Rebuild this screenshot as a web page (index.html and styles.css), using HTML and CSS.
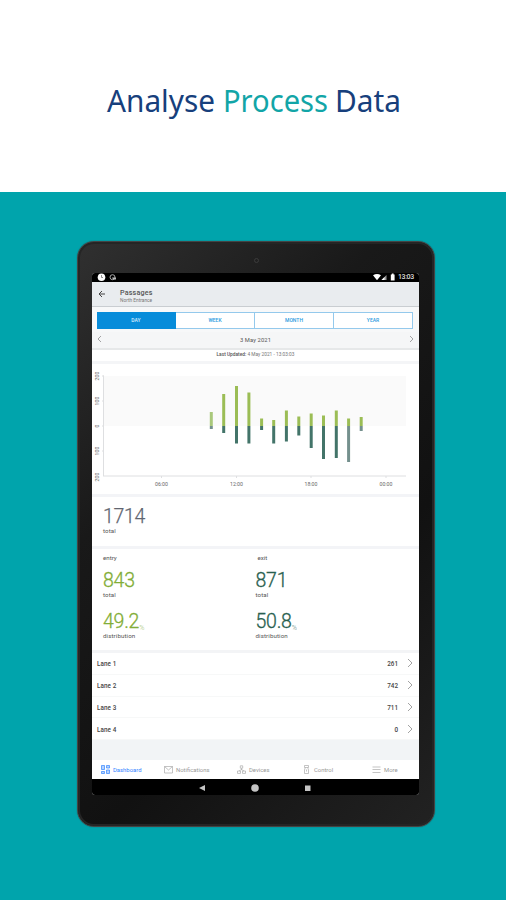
FILE: index.html
```html
<!DOCTYPE html>
<html lang="en">
<head>
<meta charset="utf-8">
<title>Analyse Process Data</title>
<link rel="stylesheet" href="styles.css">
</head>
<body>
<header class="hero">
  <svg class="headline" width="506" height="60" viewBox="0 0 506 60" role="heading">
    <text x="107" y="41.500" textLength="108" lengthAdjust="spacingAndGlyphs">Analyse</text>
    <text class="accent" x="223" y="41.500" textLength="105" lengthAdjust="spacingAndGlyphs">Process</text>
    <text x="335" y="41.500" textLength="66" lengthAdjust="spacingAndGlyphs">Data</text>
  </svg>
</header>
<main class="stage">
  <div class="tablet">
    <i class="camera"></i>
    <div class="screen">
      <div class="status">
        <svg width="26" height="9" viewBox="0 0 26 9"><circle cx="5.5" cy="4.3" r="3.8" fill="#fff"/><path d="M5.5 2v2.5H7" fill="none" stroke="#777" stroke-width=".8"/><circle cx="16.5" cy="4.2" r="2.5" fill="none" stroke="#aaa"/><path d="M16 4.5h4v2h-3z" fill="#bbb"/></svg>
        <div class="status-right">
          <svg width="23" height="9" viewBox="0 0 23 9" fill="#fff"><path d="M0 2.2Q4-.4 8 2.2L4 7.2z"/><path d="M13.5 2v5H8.5z" fill="#999"/><path d="M11.5 4v3h-3z"/><path d="M17.8 1.5h1V.6h1.8v.9h1V7.5h-3.8z"/></svg>
          <span>13:03</span>
        </div>
      </div>
      <div class="appbar">
        <svg width="8" height="8" viewBox="0 0 8 8"><path d="M7 4H1.2M4 1L1 4l3 3" fill="none" stroke="#444" stroke-width="1"/></svg>
        <div><div class="page-name">Passages</div><div class="page-sub">North Entrance</div></div>
      </div>
      <div class="segments">
        <span class="on">DAY</span><span>WEEK</span><span>MONTH</span><span>YEAR</span>
      </div>
      <div class="datebar">
        <svg width="5" height="8" viewBox="0 0 5 8"><path d="M4 1L1 4l3 3"/></svg>
        <span>3 May 2021</span>
        <svg width="5" height="8" viewBox="0 0 5 8"><path d="M1 1l3 3-3 3"/></svg>
      </div>
      <div class="updated"><b>Last Updated:</b>&nbsp;4 May 2021 - 13:03:03</div>
      <svg class="chart" width="327" height="130" viewBox="92 364 327 130">
        <rect x="104" y="376" width="302" height="50" fill="#fafafa"/>
        <path d="M103.5 375.5v100.500M102 376h2M102 401h2M102 426h2M102 451h2" stroke="#dedfe1" fill="none"/>
        <path d="M103 476h303M161.500 476v2M236.500 476v2M311 476v2M386 476v2" stroke="#dedfe1" fill="none"/>
        <g stroke-width="3" stroke="#9bbd55">
          <path d="M211.300 412v14" stroke="#a9c87b"/><path d="M223.700 394v32M236.500 386v40M248.900 392.500v33.500"/>
          <path d="M261.600 418.500v7.500M273.700 420v6M286.400 410.500v15.500M298.800 416.500v9.500M311.200 413.500v12.500M323.500 415.500v10.500M336.300 410.500v15.500M348.600 418.500v7.500M361.200 417v9"/>
        </g>
        <g stroke-width="3" stroke="#437469">
          <path d="M211.300 426v3M361.200 426v5M348.600 426v36" stroke="#74908d"/>
          <path d="M223.700 426v7M236.500 426v17.500M248.900 426v17.500M261.600 426v4M273.700 426v17.500M286.400 426v15.500M298.800 426v9.500M311.200 426v22M323.500 426v33M336.300 426v32"/>
        </g>
        <g class="axis">
          <text x="161.500" y="486">06:00</text><text x="236.500" y="486">12:00</text><text x="311" y="486">18:00</text><text x="386" y="486">00:00</text>
          <text transform="translate(99 376) rotate(-90)">200</text><text transform="translate(99 401) rotate(-90)">100</text><text transform="translate(99 426) rotate(-90)">0</text><text transform="translate(99 451) rotate(-90)">100</text><text transform="translate(99 477) rotate(-90)">200</text>
        </g>
      </svg>
      <section class="total"><div class="num">1714</div><div class="cap">total</div></section>
      <section class="split">
        <div class="col entry"><div class="name">entry</div><div class="num">843</div><div class="cap">total</div><div class="num second">49.2<small>%</small></div><div class="cap">distribution</div></div>
        <div class="col exit"><div class="name">exit</div><div class="num">871</div><div class="cap">total</div><div class="num second">50.8<small>%</small></div><div class="cap">distribution</div></div>
      </section>
      <div class="lanes">
        <div class="lane"><span>Lane 1</span><span>261</span><svg width="6" height="10" viewBox="0 0 6 10"><path d="M1 1l4 4-4 4"/></svg></div>
        <div class="lane"><span>Lane 2</span><span>742</span><svg width="6" height="10" viewBox="0 0 6 10"><path d="M1 1l4 4-4 4"/></svg></div>
        <div class="lane"><span>Lane 3</span><span>711</span><svg width="6" height="10" viewBox="0 0 6 10"><path d="M1 1l4 4-4 4"/></svg></div>
        <div class="lane"><span>Lane 4</span><span>0</span><svg width="6" height="10" viewBox="0 0 6 10"><path d="M1 1l4 4-4 4"/></svg></div>
      </div>
      <div class="filler"></div>
      <nav class="tabs">
        <span class="tab active"><svg width="9" height="9" viewBox="0 0 9 9"><path d="M.5.5h3v4h-3zM5.500.5h3v2.500h-3zM.5 6.500h3v2h-3zM5.500 5h3v3.500h-3z"/></svg>Dashboard</span>
        <span class="tab"><svg width="9" height="9" viewBox="0 0 9 9"><path d="M.5 1.500h8v6.500h-8zM.5 1.500l4 3.500 4-3.500"/></svg>Notifications</span>
        <span class="tab"><svg width="9" height="9" viewBox="0 0 9 9"><path d="M3.300.8h2.400v2.400H3.300zM4.500 3.200v2M2 6l2.500-1.500L7 6M.5 6h3v2.400h-3zM5.500 6h3v2.400h-3z"/></svg>Devices</span>
        <span class="tab"><svg width="9" height="9" viewBox="0 0 9 9"><path d="M2.500.5h4v2h-4zM3.300 2.500L2.500 5v3.500h4V5l-.8-2.500M4.500 4.500v2"/></svg>Control</span>
        <span class="tab"><svg width="9" height="9" viewBox="0 0 9 9"><path d="M.5 2h8M.5 4.500h8M.5 7.500h8"/></svg>More</span>
      </nav>
      <div class="sysnav">
        <svg width="327" height="16" viewBox="0 0 327 16" fill="#c4c4c4"><path d="M107 9l6-3v6z"/><circle cx="163" cy="9" r="3.800"/><rect x="213" y="6.500" width="5.500" height="5.500"/></svg>
      </div>
    </div>
  </div>
</main>
</body>
</html>
```
FILE: styles.css
```css
* { box-sizing: border-box; }
body { margin: 0; width: 506px; height: 900px; overflow: hidden; background: #00a4ac; font-family: Roboto, "Liberation Sans", sans-serif; }
svg { display: block; flex: none; }
.hero { height: 192px; background: #fff; padding-top: 70px; }
.headline text { font-family: "Noto Sans", "Open Sans", sans-serif; font-size: 30px; fill: #173f7c; }
.headline .accent { fill: #12a5a7; }
.stage { height: 708px; padding: 49px 0 0 77px; }
.tablet { position: relative; width: 358px; height: 586px; padding: 31px 14px 0; border-radius: 17px; background: linear-gradient(135deg, #303030 0, #191919 32%, #111 65%, #222 100%); border: 1px solid #444; box-shadow: inset 0 0 0 2px #252525, 0 0 1px #244; }
.camera { position: absolute; left: 176px; top: 16px; width: 5px; height: 5px; border-radius: 50%; background: #202020; border: 1px solid #3c3c3c; }
.screen { width: 327px; height: 522px; background: #fff; border-radius: 3px; overflow: hidden; display: flex; flex-direction: column; }
.screen > * { flex: none; }
.status { height: 9px; background: #000; display: flex; justify-content: space-between; padding: 0 5px 0 4px; }
.status-right { display: flex; gap: 2px; }
.status span { font-size: 7px; line-height: 9px; font-weight: 500; color: #ddd; letter-spacing: -.4px; width: 16px; }
.appbar { height: 25px; background: #e9ecef; border-bottom: 1px solid #c9cdd1; display: flex; padding: 8px 0 0 6px; gap: 14px; }
.appbar > svg { height: 8px; }
.appbar > div { margin-top: -2px; }
.page-name { font-size: 7.2px; line-height: 9px; font-weight: 500; color: #555; letter-spacing: .15px; }
.page-sub { font-size: 4.8px; line-height: 7px; color: #777; }
.segments { height: 25px; padding: 5px 6px 3px 5px; background: #f7f8f9; display: flex; }
.segments span { flex: 1; border: 1px solid #94c9ec; border-left-width: 0; background: #fff; color: #299be0; font-size: 5px; font-weight: 500; line-height: 15px; text-align: center; }
.segments .on { background: #078cda; border-color: #078cda; color: #d5edff; }
.datebar { height: 18px; background: #f5f6f7; border-bottom: 2px solid #e6e8e9; display: flex; justify-content: space-between; align-items: center; padding: 0 5px; font-size: 5.8px; color: #555; letter-spacing: .1px; }
.datebar svg { position: relative; top: -1px; }
.datebar span { padding-bottom: 1px; }
.datebar svg path, .lane svg path { fill: none; stroke: #8c8c8c; stroke-width: .8; }
.updated { height: 14px; font-size: 4.8px; line-height: 10px; text-align: center; color: #777; border-bottom: 3px solid #f4f5f7; }
.updated b { font-weight: 500; color: #555; }
.axis text { font-size: 5.2px; fill: #666; text-anchor: middle; }
.num { font-size: 19.5px; line-height: 20px; color: #606570; letter-spacing: -.4px; font-weight: 400; }
.cap, .name { font-size: 6.2px; line-height: 7px; color: #555; }
.cap { letter-spacing: .1px; }
.total { height: 55px; border-top: 3px solid #f3f4f7; border-bottom: 3px solid #f3f4f7; padding: 10px 0 0 11px; }
.total .num { letter-spacing: -.3px; font-weight: 300; -webkit-text-stroke: .25px currentColor; }
.total .cap { margin-top: 1px; }
.split { height: 104px; border-bottom: 3px solid #f3f4f6; display: flex; padding: 6px 0 0 11px; }
.col { width: 152.500px; }
.col .name { margin-bottom: 9px; }
.col .num { height: 19px; font-weight: 300; letter-spacing: -.25px; -webkit-text-stroke: .3px currentColor; }
.col .cap { margin-top: 2px; }
.col .num.second { margin-top: 13px; }
.exit .name { padding-left: 2px; }
.entry .num { color: #82ad36; }
.exit .num { color: #28604f; }
.num small { font-size: 7px; line-height: 7px; letter-spacing: 0; position: relative; top: 2px; opacity: .7; -webkit-text-stroke: 0; }
.lanes { height: 87px; }
.lane { height: 21.750px; border-bottom: 1px solid #f7f8f8; display: flex; align-items: center; padding: 0 6px 0 5px; font-size: 6.300px; color: #444; font-weight: 500; }
.lane span { padding-top: 2px; }
.lane span:first-child { flex: 1; letter-spacing: .1px; }
.lane span + span { margin-right: 9px; }
.filler { height: 20px; background: #f2f4f6; }
.tabs { height: 19px; display: grid; grid-template-columns: 63px 73px 65px 70px 47px; padding-left: 9px; align-items: center; }
.tab { display: flex; align-items: center; gap: 3px; font-size: 5.900px; color: #999; }
.tab svg { fill: none; stroke: #aaa; stroke-width: .7; }
.tab.active { color: #3385ff; }
.tab.active svg { stroke: #3385ff; fill: #b5d3ff; }
.sysnav { height: 16px; background: #000; }
```
